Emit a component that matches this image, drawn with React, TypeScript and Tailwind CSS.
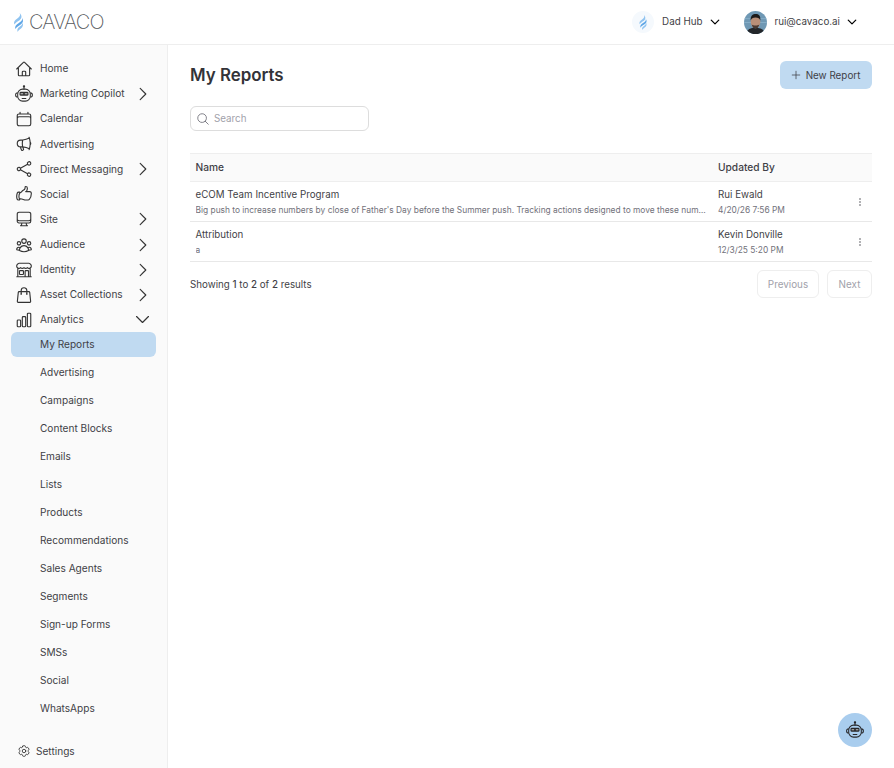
import type { ComponentType } from "react";
import {
  HiOutlineHome,
  HiOutlineCalendar,
  HiOutlineMegaphone,
  HiOutlineShare,
  HiOutlineHandThumbUp,
  HiOutlineComputerDesktop,
  HiOutlineUserGroup,
  HiOutlineBuildingStorefront,
  HiOutlineShoppingBag,
  HiOutlineChartBar,
  HiOutlineCog6Tooth,
  HiOutlineChevronRight,
  HiOutlineChevronDown,
  HiOutlineMagnifyingGlass,
  HiOutlinePlus,
  HiEllipsisVertical,
} from "react-icons/hi2";

function BotIcon({ className }: { className?: string }) {
  return (
    <svg viewBox="0 0 24 24" fill="none" stroke="currentColor" strokeWidth="1.4" className={className}>
      <path d="M12 1.8v3.7" strokeLinecap="round" />
      <circle cx="12" cy="1.8" r="0.9" fill="currentColor" />
      <rect x="3.6" y="5.5" width="16.8" height="16" rx="6.5" />
      <rect x="6" y="9" width="12" height="5.4" rx="1.8" fill="currentColor" stroke="none" />
      <path d="M8 11.7h2.4M13.6 11.7h2.4" stroke="#fff" strokeWidth="1" strokeLinecap="round" />
      <path d="M9.5 18h5" strokeLinecap="round" />
      <path d="M3.6 10.5c-1.8 0-2.8 1-2.8 2.8s1 2.8 2.8 2.8M20.4 10.5c1.8 0 2.8 1 2.8 2.8s-1 2.8-2.8 2.8" />
    </svg>
  );
}

function Flame({ className }: { className?: string }) {
  return (
    <svg viewBox="0 0 14 24" className={className}>
      <path d="M8.5 0C10 3 8.4 5 5.5 7 2.4 9.2 0.6 11 1.6 14.6 3 12.2 5.5 11 8.4 9 11.6 6.6 11.6 3.2 8.5 0Z" fill="#8fc3f0" />
      <path d="M11.6 6.2C12.2 9.4 10 10.8 7 12.8 3.8 15 2 17 3 20.2 4.4 17.8 6.8 16.6 9.4 14.8 12.8 12.4 13.8 9.6 11.6 6.2Z" fill="#5ea6e6" />
      <path d="M11.8 12.4C12 15 10.2 16.2 8 17.8 6 19.2 4.8 20.8 6 24 7 21.8 8.4 21 10.2 19.6 12.6 17.6 13.6 15 11.8 12.4Z" fill="#8fc3f0" />
    </svg>
  );
}

function Avatar() {
  return (
    <svg viewBox="0 0 24 24" className="w-[23px] h-[23px] rounded-full shrink-0">
      <rect width="24" height="24" fill="#6f98b4" />
      <path d="M0 8h24M0 12h24" stroke="#86aec8" strokeWidth="1" />
      <path d="M2 24c1-5 5-6.5 10-6.5S21 19 22 24Z" fill="#23262a" />
      <ellipse cx="12" cy="11.5" rx="5" ry="6.5" fill="#b98f78" />
      <path d="M7 10c-.5-5 2-7 5.5-7S17.5 5.5 17 10c-.8-2.5-2-3.2-5-3.2S8 7.5 7 10Z" fill="#1d1b1a" />
      <path d="M8 14c1 3.5 2.5 4.5 4 4.5s3-1 4-4.5c-1 1-2.4 1-4 1s-3 0-4-1Z" fill="#4a3a33" />
    </svg>
  );
}

type NavItem = { label: string; icon: ComponentType<{ className?: string }>; arrow?: boolean };

const topNav: NavItem[] = [
  { label: "Home", icon: HiOutlineHome },
  { label: "Marketing Copilot", icon: BotIcon, arrow: true },
  { label: "Calendar", icon: HiOutlineCalendar },
  { label: "Advertising", icon: HiOutlineMegaphone },
  { label: "Direct Messaging", icon: HiOutlineShare, arrow: true },
  { label: "Social", icon: HiOutlineHandThumbUp },
  { label: "Site", icon: HiOutlineComputerDesktop, arrow: true },
  { label: "Audience", icon: HiOutlineUserGroup, arrow: true },
  { label: "Identity", icon: HiOutlineBuildingStorefront, arrow: true },
  { label: "Asset Collections", icon: HiOutlineShoppingBag, arrow: true },
];

const analyticsNav = [
  "Advertising",
  "Campaigns",
  "Content Blocks",
  "Emails",
  "Lists",
  "Products",
  "Recommendations",
  "Sales Agents",
  "Segments",
  "Sign-up Forms",
  "SMSs",
  "Social",
  "WhatsApps",
];

const reports = [
  {
    name: "eCOM Team Incentive Program",
    description:
      "Big push to increase numbers by close of Father's Day before the Summer push. Tracking actions designed to move these numbers higher",
    user: "Rui Ewald",
    date: "4/20/26 7:56 PM",
  },
  { name: "Attribution", description: "a", user: "Kevin Donville", date: "12/3/25 5:20 PM" },
];

function Sidebar() {
  return (
    <aside className="w-[168px] shrink-0 h-[723px] bg-[#fafafa] border-r border-[#eeeeee] flex flex-col text-[#3f3f46] text-[10.1px] pt-[11.3px]">
      {topNav.map((item) => (
        <div key={item.label} className="h-[25.1px] flex items-center pl-[15px] pr-[15px]">
          <item.icon className="w-[18px] h-[18px] shrink-0 text-[#333333]" />
          <span className="ml-[7px] flex-1 whitespace-nowrap">{item.label}</span>
          {item.arrow && <HiOutlineChevronRight className="w-[18px] h-[18px] shrink-0 text-[#333333]" />}
        </div>
      ))}
      <div className="h-[25.1px] flex items-center pl-[15px] pr-[15px]">
        <HiOutlineChartBar className="w-[18px] h-[18px] shrink-0 text-[#333333]" />
        <span className="ml-[7px] flex-1">Analytics</span>
        <HiOutlineChevronDown className="w-[19px] h-[19px] shrink-0 text-[#333333]" />
      </div>
      <div className="mx-[11px] h-[24.5px] bg-[#c0daf1] rounded-md flex items-center pl-[29px]">My Reports</div>
      <div className="mt-[2.2px] flex flex-col">
        {analyticsNav.map((label) => (
          <div key={label} className="h-[28px] flex items-center pl-[40px] whitespace-nowrap">
            {label}
          </div>
        ))}
      </div>
      <div className="mt-auto mb-[9px] flex items-center pl-[17px]">
        <HiOutlineCog6Tooth className="w-[14px] h-[14px] text-[#333333]" />
        <span className="ml-[5px]">Settings</span>
      </div>
    </aside>
  );
}

export default function App() {
  return (
    <div className="h-[768px] bg-white overflow-hidden relative text-[#3f3f46]" style={{ fontFamily: "Inter, sans-serif" }}>
      <header className="h-[45px] border-b border-[#eeeeee] flex items-center pl-[13px] pr-[36px]">
        <Flame className="w-[11px] h-[19px]" />
        <span className="ml-[5px] text-[20px] font-extralight text-[#55585c] tracking-[-0.9px]">CAVACO</span>
        <div className="ml-auto flex items-center text-[9.8px]">
          <div className="w-[22px] h-[22px] rounded-full bg-[#f5f9fd] flex items-center justify-center">
            <Flame className="w-[10px] h-[15px]" />
          </div>
          <span className="ml-[8px]">Dad Hub</span>
          <HiOutlineChevronDown className="ml-[6px] w-[12px] h-[12px] text-black [&_path]:stroke-[2.5]" />
          <div className="ml-[23px]"><Avatar /></div>
          <span className="ml-[8px]">rui@cavaco.ai</span>
          <HiOutlineChevronDown className="ml-[6px] w-[12px] h-[12px] text-black [&_path]:stroke-[2.5]" />
        </div>
      </header>
      <div className="flex">
        <Sidebar />
        <main className="flex-1 pl-[22px] pr-[22px] pt-[16px]">
          <div className="flex items-center justify-between h-[28px]">
            <h1 className="text-[16.9px] font-semibold text-[#333338] pt-[2px]">My Reports</h1>
            <button className="w-[92px] h-[28px] rounded-md bg-[#c0daf1] flex items-center justify-center gap-[4px] pr-[2px] text-[9.85px]">
              <HiOutlinePlus className="w-[12px] h-[12px]" />
              New Report
            </button>
          </div>
          <div className="mt-[17px] w-[179px] h-[25px] rounded-md border border-[#dddddd] flex items-center pl-[5px]">
            <HiOutlineMagnifyingGlass className="w-[14px] h-[14px] text-[#71717a]" />
            <span className="ml-[4px] text-[9.8px] text-[#a1a1aa] pt-[1px]">Search</span>
          </div>
          <div className="mt-[22px]">
            <div className="h-[29px] bg-[#fafafa] border-y border-[#eeeeee] flex items-center text-[10.2px] font-medium">
              <div className="w-[528px] pl-[5.5px]">Name</div>
              <div>Updated By</div>
            </div>
            {reports.map((report) => (
              <div key={report.name} className="h-[40px] border-b border-[#e8e8e8] flex items-center">
                <div className="w-[528px] pl-[5.5px] pr-[11.5px] min-w-0">
                  <div className="text-[9.75px] leading-[14px] pt-[1px]">{report.name}</div>
                  <div className="mt-[2px] text-[8.4px] leading-[12px] text-[#71717a] truncate">{report.description}</div>
                </div>
                <div className="flex-1">
                  <div className="text-[9.75px] leading-[14px] pt-[1px]">{report.user}</div>
                  <div className="mt-[2px] text-[8.4px] leading-[12px] text-[#71717a]">{report.date}</div>
                </div>
                <HiEllipsisVertical className="w-[12px] h-[12px] mr-[6px]" />
              </div>
            ))}
            <div className="mt-[8px] flex items-center justify-between">
              <p className="text-[9.75px] pt-[2px]">
                Showing <span className="font-medium">1</span> to <span className="font-medium">2</span> of{" "}
                <span className="font-medium">2</span> results
              </p>
              <div className="flex gap-[8px] text-[9.9px] text-[#a1a1aa]">
                <button className="w-[62px] h-[28px] rounded-md border border-[#eeeeee]">Previous</button>
                <button className="w-[45px] h-[28px] rounded-md border border-[#eeeeee]">Next</button>
              </div>
            </div>
          </div>
        </main>
      </div>
      <button className="absolute left-[838px] top-[713px] w-[34px] h-[34px] rounded-full bg-[#a9cdee] flex items-center justify-center text-[#27272a]">
        <BotIcon className="w-[18px] h-[18px]" />
      </button>
    </div>
  );
}
